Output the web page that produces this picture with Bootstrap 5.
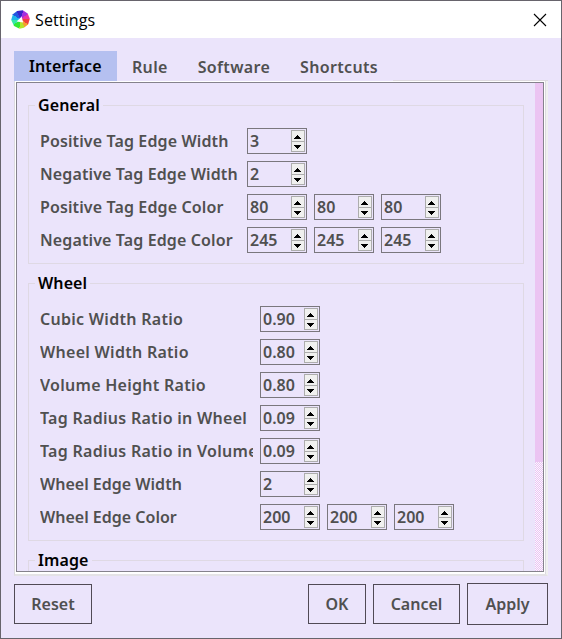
<!DOCTYPE html>
<html lang="en">
<head>
<meta charset="utf-8">
<title>Settings</title>
<link href="https://cdn.jsdelivr.net/npm/bootstrap@5.3.0/dist/css/bootstrap.min.css" rel="stylesheet">
<style>
html,body{height:100%}
body{font-family:"Noto Sans",sans-serif;font-size:16px;font-weight:600;line-height:22px;color:#505050;background:#ebe4fb}
.window{width:562px;height:639px;border:1px solid #67646c;background:#ebe4fb}
.titlebar{height:37px;background:#fff;padding:0 14px 0 10px}
.titlebar .caption{font-family:"Open Sans","Noto Sans",sans-serif;font-weight:400;font-size:16px;letter-spacing:.12px;color:#000;margin-left:5px}
.wheel-logo{width:19px;height:19px;background:conic-gradient(from -24deg,#3a25cc 0 40deg,#a030e0 0 76deg,#ec35a0 0 112deg,#f04040 0 146deg,#f5a030 0 176deg,#b5e52c 0 212deg,#35e832 0 256deg,#35e8a8 0 290deg,#20b5e8 0 326deg,#2555df 0);clip-path:polygon(32% 5%,62% 1%,88% 18%,99% 46%,90% 76%,68% 94%,45% 99%,16% 84%,1% 52%,10% 23%)}
.tabs{height:30px;margin:13px 13px 0}
.tabs .nav-link{color:#505050;padding:5px 15px 3px;height:30px;border-radius:0;line-height:22px;letter-spacing:.33px}
.tabs .nav-link.active{background:#b5c0f0;color:#000;padding:4px 0 4px 15px;width:103px;letter-spacing:.12px}
.tab-rule{flex:1;height:1px;background:#dedae0}
.frame{height:495px;margin:0 13px;padding-right:1px;border-left:1px solid #dcdadf;border-right:2px solid #f0f0f0;border-bottom:2px solid #e4e2e6}
.frame-mid{border:1px solid #fff;border-bottom-width:2px;height:493px;box-shadow:1px 0 0 #dcdadf}
.frame-in{border:1px solid #85828c;height:490px}
.pane{padding:11px 11px 0}
.group{border:1px solid #dfd9e4;padding:22px 11px 10px;margin:11px 0 19px}
.group-title{color:#000;background:#ebe4fb;margin:-34px 0 12px -5px;padding:0 3px;width:max-content;height:22px;letter-spacing:.1px}
.fields{display:grid;row-gap:7px;column-gap:7px;grid-auto-rows:26px}
.g1{grid-template-columns:200px 1fr}
.g2{grid-template-columns:213px 1fr}
.fields>span{white-space:nowrap;overflow:hidden;line-height:27px;height:26px}
.g1>span{letter-spacing:.12px}
.g2>.wide{letter-spacing:.28px}
.trio{gap:7px}
.spin{width:60px;height:26px;border:1px solid #7a777d;padding:0 1px 0 2px}
.spin svg{flex:none}
.track{width:8px;flex:none;background-color:#f3ebfb;background-image:conic-gradient(#ebc4f2 25%,#fbf7ff 0 50%,#ebc4f2 0 75%,#fbf7ff 0);background-size:2px 2px}
.thumb{height:379px;background:#ebc4f2}
.actions{padding:7px 13px 0;gap:7px}
.actions .btn{height:40px;border:1px solid #504a55;border-radius:0;color:#505050;font-weight:600;font-size:16px;line-height:22px;padding:0}
.b-reset{width:78px}.b-ok{width:58px}.b-cancel{width:87px}
.actions .b-apply{width:81px;height:42px}
</style>
<script src="https://cdn.jsdelivr.net/npm/bootstrap@5.3.0/dist/js/bootstrap.bundle.min.js"></script>
</head>
<body class="overflow-hidden">
<svg width="0" height="0" class="position-absolute"><defs>
<symbol id="steps" viewBox="0 0 14 22"><rect x=".5" y=".5" width="13" height="21" fill="#f0f0ef" stroke="#adadad"/><path d="M1 11.5H13" stroke="#adadad"/><path d="M6 5h1v1h1v1h1v1h1v1H3V8h1V7h1V6h1zM3 15h7v1H9v1H8v1H7v1H6v-1H5v-1H4v-1H3z" fill="#000" shape-rendering="crispEdges"/></symbol>
</defs></svg>
<div class="window d-flex flex-column">
  <header class="titlebar d-flex align-items-center">
    <div class="wheel-logo d-flex"><svg width="19" height="19" viewBox="0 0 19 19"><path d="M10.6 6.5 12.2 12.4 5.6 11.6Z" fill="#fff"/></svg></div>
    <span class="caption">Settings</span>
    <svg class="ms-auto" width="14" height="14" viewBox="0 0 14 14"><path d="M1 1 13 13M13 1 1 13" stroke="#000" stroke-width="1.1"/></svg>
  </header>
  <nav class="tabs nav flex-nowrap align-items-end">
    <a class="nav-link active">Interface</a><a class="nav-link">Rule</a><a class="nav-link">Software</a><a class="nav-link">Shortcuts</a><span class="tab-rule"></span>
  </nav>
  <main class="frame"><div class="frame-mid"><div class="frame-in d-flex overflow-hidden">
    <div class="pane flex-grow-1">
      <section class="group">
        <div class="group-title">General</div>
        <div class="fields g1">
          <span>Positive Tag Edge Width</span><div class="d-flex"><div class="spin d-flex align-items-center justify-content-between">3<svg width="14" height="22"><use href="#steps"/></svg></div></div>
          <span>Negative Tag Edge Width</span><div class="d-flex"><div class="spin d-flex align-items-center justify-content-between">2<svg width="14" height="22"><use href="#steps"/></svg></div></div>
          <span>Positive Tag Edge Color</span><div class="d-flex trio"><div class="spin d-flex align-items-center justify-content-between">80<svg width="14" height="22"><use href="#steps"/></svg></div><div class="spin d-flex align-items-center justify-content-between">80<svg width="14" height="22"><use href="#steps"/></svg></div><div class="spin d-flex align-items-center justify-content-between">80<svg width="14" height="22"><use href="#steps"/></svg></div></div>
          <span>Negative Tag Edge Color</span><div class="d-flex trio"><div class="spin d-flex align-items-center justify-content-between">245<svg width="14" height="22"><use href="#steps"/></svg></div><div class="spin d-flex align-items-center justify-content-between">245<svg width="14" height="22"><use href="#steps"/></svg></div><div class="spin d-flex align-items-center justify-content-between">245<svg width="14" height="22"><use href="#steps"/></svg></div></div>
        </div>
      </section>
      <section class="group">
        <div class="group-title">Wheel</div>
        <div class="fields g2">
          <span class="wide">Cubic Width Ratio</span><div class="d-flex"><div class="spin d-flex align-items-center justify-content-between">0.90<svg width="14" height="22"><use href="#steps"/></svg></div></div>
          <span class="wide">Wheel Width Ratio</span><div class="d-flex"><div class="spin d-flex align-items-center justify-content-between">0.80<svg width="14" height="22"><use href="#steps"/></svg></div></div>
          <span class="wide">Volume Height Ratio</span><div class="d-flex"><div class="spin d-flex align-items-center justify-content-between">0.80<svg width="14" height="22"><use href="#steps"/></svg></div></div>
          <span class="wide">Tag Radius Ratio in Wheel</span><div class="d-flex"><div class="spin d-flex align-items-center justify-content-between">0.09<svg width="14" height="22"><use href="#steps"/></svg></div></div>
          <span class="wide">Tag Radius Ratio in Volume</span><div class="d-flex"><div class="spin d-flex align-items-center justify-content-between">0.09<svg width="14" height="22"><use href="#steps"/></svg></div></div>
          <span>Wheel Edge Width</span><div class="d-flex"><div class="spin d-flex align-items-center justify-content-between">2<svg width="14" height="22"><use href="#steps"/></svg></div></div>
          <span>Wheel Edge Color</span><div class="d-flex trio"><div class="spin d-flex align-items-center justify-content-between">200<svg width="14" height="22"><use href="#steps"/></svg></div><div class="spin d-flex align-items-center justify-content-between">200<svg width="14" height="22"><use href="#steps"/></svg></div><div class="spin d-flex align-items-center justify-content-between">200<svg width="14" height="22"><use href="#steps"/></svg></div></div>
        </div>
      </section>
      <section class="group"><div class="group-title">Image</div></section>
    </div>
    <div class="track"><div class="thumb"></div></div>
  </div></div></main>
  <footer class="actions d-flex align-items-center">
    <button class="btn b-reset me-auto">Reset</button><button class="btn b-ok">OK</button><button class="btn b-cancel">Cancel</button><button class="btn b-apply">Apply</button>
  </footer>
</div>
</body>
</html>
